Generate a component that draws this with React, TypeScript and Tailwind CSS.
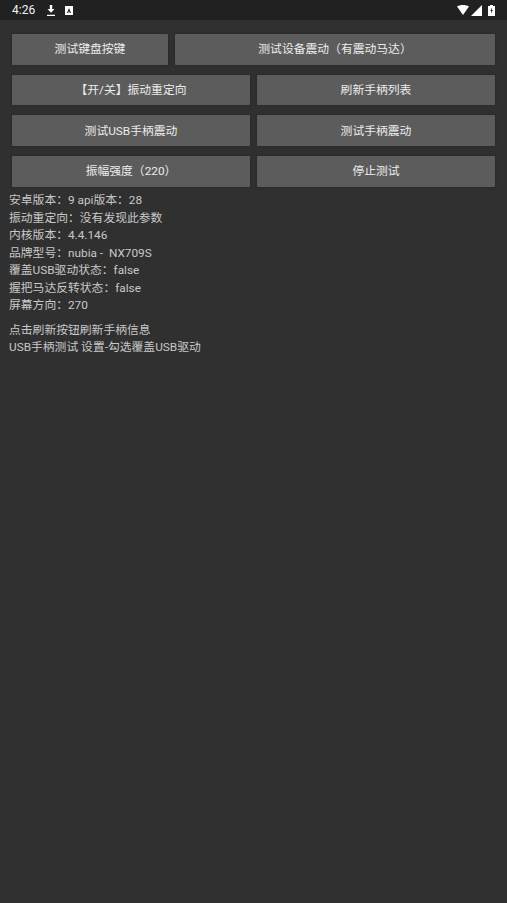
const font = { fontFamily: '"Roboto", "Noto Sans CJK SC", sans-serif' };

function Btn({ children, className = "" }: { children: React.ReactNode; className?: string }) {
  return (
    <button className={`h-[30.67px] pt-[2px] flex items-center justify-center bg-[#5c5c5c] text-[#ececec] text-[11.8px] rounded-[1px] shadow-[0_0_3px_rgba(0,0,0,0.25)] ${className}`}>
      {children}
    </button>
  );
}

const info = [
  "安卓版本：9 api版本：28",
  "振动重定向：没有发现此参数",
  "内核版本：4.4.146",
  "品牌型号：nubia -  NX709S",
  "覆盖USB驱动状态：false",
  "握把马达反转状态：false",
  "屏幕方向：270",
];

export default function App() {
  return (
    <div className="w-[507px] h-[903px] bg-[#303030] overflow-hidden flex flex-col" style={font}>
      <div className="h-[20px] bg-[#212121] flex items-center justify-between pl-[12px] pr-[12px] shrink-0">
        <div className="flex items-center">
          <span className="text-[#f2f2f2] text-[12px] w-[35px]">4:26</span>
          <svg width="8" height="11" viewBox="0 0 8 11">
            <path d="M2.800 0h2.400v4H7.500L4 7.800.5 4h2.300z M0 9.800h8V11H0z" fill="#fff" />
          </svg>
          <svg width="8" height="9" viewBox="0 0 8 9" className="ml-[10px]">
            <path fillRule="evenodd" d="M0 0h8v9H0z M4 2 2 7h1.200l.8-2 .8 2H6z" fill="#fff" />
          </svg>
        </div>
        <div className="flex items-center">
          <svg width="12" height="10" viewBox="0 0 12 10">
            <path d="M0 1.500C3.200-.5 8.800-.5 12 1.500L6 10z" fill="#fff" />
          </svg>
          <svg width="11" height="11" viewBox="0 0 11 11" className="ml-[2px]">
            <path d="M11 0v11H0z" fill="#fff" />
          </svg>
          <svg width="7" height="11" viewBox="0 0 7 11" className="ml-[6px]">
            <path fillRule="evenodd" d="M2 0h3v1h2v10H0V1h2z M4 2.500 2.300 6h1v2.700L4.800 5h-1z" fill="#fff" />
          </svg>
        </div>
      </div>

      <div className="flex flex-col pt-[14px] px-[12px] gap-[10px]">
        <div className="flex gap-[7px]">
          <Btn className="w-[156px]">测试键盘按键</Btn>
          <Btn className="flex-1">测试设备震动（有震动马达）</Btn>
        </div>
        <div className="grid grid-cols-2 gap-[7px]">
          <Btn>【开/关】振动重定向</Btn>
          <Btn>刷新手柄列表</Btn>
        </div>
        <div className="grid grid-cols-2 gap-[7px]">
          <Btn>测试USB手柄震动</Btn>
          <Btn>测试手柄震动</Btn>
        </div>
        <div className="grid grid-cols-2 gap-[7px]">
          <Btn>振幅强度（220）</Btn>
          <Btn>停止测试</Btn>
        </div>
      </div>

      <div className="pl-[9px] pt-[5.800px] text-[11.8px] leading-[17.5px] text-[#c8c8c8]">
        {info.map((t) => (
          <div key={t} className="whitespace-pre">{t}</div>
        ))}
        <div className="mt-[7px]">点击刷新按钮刷新手柄信息</div>
        <div>USB手柄测试 设置-勾选覆盖USB驱动</div>
      </div>
    </div>
  );
}
